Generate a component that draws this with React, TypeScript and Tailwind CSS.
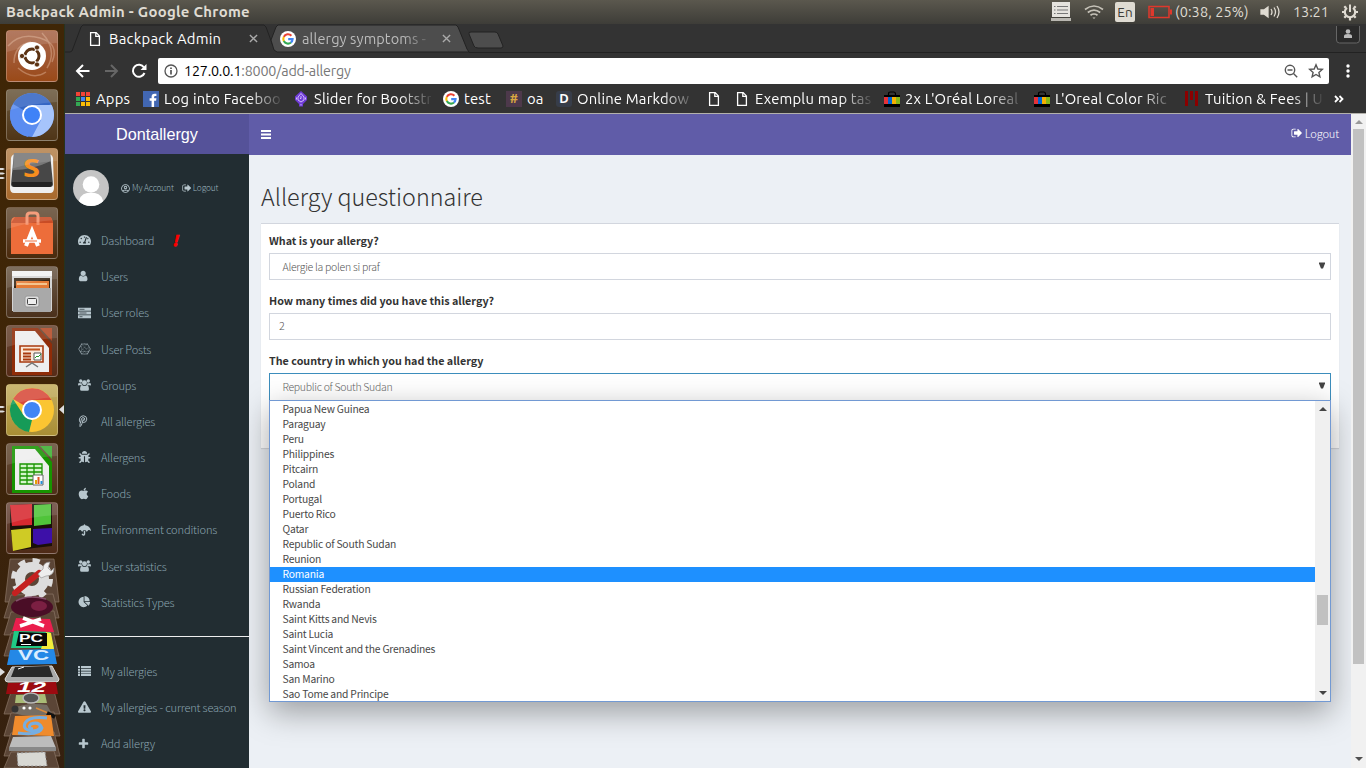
import React from "react";
import {
  FaApple, FaBug, FaUmbrella, FaExclamationTriangle,
  FaTachometerAlt, FaRegUserCircle, FaConnectdevelop,
} from "react-icons/fa";

type IconProps = { className?: string };

const Glyph = ({ d, className }: IconProps & { d: string }) => (
  <svg viewBox="0 0 1792 1792" className={className} fill="currentColor"><path d={d} /></svg>
);
const SignOut = ({ className }: IconProps) => (
  <Glyph className={className} d="M704 1440q0 4 1 20t.5 26.5-3 23.5-10 19.5-20.5 6.5h-320q-119 0-203.5-84.5t-84.5-203.5v-704q0-119 84.5-203.5t203.5-84.5h320q13 0 22.5 9.5t9.5 22.5q0 4 1 20t.5 26.5-3 23.5-10 19.5-20.5 6.5h-320q-66 0-113 47t-47 113v704q0 66 47 113t113 47h312l11.5 1 11.5 3 8 5.5 7 9 2 13.5zm928-544q0 26-19 45l-544 544q-19 19-45 19t-45-19-19-45v-288h-448q-26 0-45-19t-19-45v-384q0-26 19-45t45-19h448v-288q0-26 19-45t45-19 45 19l544 544q19 19 19 45z" />
);
const User = ({ className }: IconProps) => (
  <svg viewBox="200 0 1792 1792" className={className} fill="currentColor"><path d="M1536 1399q0 109-62.5 187t-150.5 78h-854q-88 0-150.5-78t-62.5-187q0-85 8.5-160.5t31.5-152 58.5-131 94-89 134.5-34.5q131 128 313 128t313-128q76 0 134.5 34.5t94 89 58.5 131 31.5 152 8.5 160.5zm-256-887q0 159-112.5 271.5t-271.5 112.5-271.5-112.5-112.5-271.5 112.5-271.5 271.5-112.5 271.5 112.5 112.5 271.5z" /></svg>
);
const Plus = ({ className }: IconProps) => (
  <svg viewBox="150 0 1792 1792" className={className} fill="currentColor"><path d="M1600 736v192q0 40-28 68t-68 28h-416v416q0 40-28 68t-68 28h-192q-40 0-68-28t-28-68v-416h-416q-40 0-68-28t-28-68v-192q0-40 28-68t68-28h416v-416q0-40 28-68t68-28h192q40 0 68 28t28 68v416h416q40 0 68 28t28 68z" /></svg>
);
const Pie = ({ className }: IconProps) => (
  <Glyph className={className} d="M768 890l546 546q-106 108-247.5 168t-298.5 60q-209 0-385.5-103t-279.5-279.5-103-385.5 103-385.5 279.5-279.5 385.5-103v762zm187 6h773q0 157-60 298.5t-168 247.5zm709-128h-768v-768q209 0 385.5 103t279.5 279.5 103 385.5z" />
);
const Group = ({ className }: IconProps) => (
  <svg viewBox="0 0 14 13" className={className} fill="currentColor">
    <circle cx="2.900" cy="2.200" r="1.800" /><circle cx="11.100" cy="2.200" r="1.800" /><circle cx="7" cy="4" r="2.700" />
    <path d="M0 6.600q0-2.400 1-2.400 1.800.7 2.800.2 0 1.700 1 2.500H1.200Q0 7.400 0 6.600zM14 6.600q0-2.400-1-2.400-1.800.7-2.800.2 0 1.700-1 2.500h3.600q1.200.5 1.200-.3zM2.200 11q0-4.200 2.200-4.200Q7 8.600 9.600 6.800q2.200 0 2.200 4.200 0 1.700-1.700 1.700H3.900q-1.700 0-1.700-1.700z" />
  </svg>
);
const Pin = ({ className }: IconProps) => (
  <svg viewBox="0 0 13 13" className={className} fill="none" stroke="currentColor" strokeWidth="1">
    <path d="M2 8.300Q.6 6.500 1 4.300 2 .9 5.200.8q3.700.2 3.800 3.600Q8.700 8.200 5.400 8.200q-1.200 0-1.500-.8" /><path d="m5.300 4-1.600 5.400Q3.200 11.500 1.700 12.600q-.3-1.700.2-3.500L3.200 4.300Q3.700 2.700 5.200 2.700q1.600.2 1.500 1.800-.3 1.800-1.600 1.800" />
  </svg>
);
const ServerStack = ({ className }: IconProps) => (
  <svg viewBox="0 0 13 12" className={className} fill="currentColor">
    <path d="M0 .8h13v3H0zM0 4.500h13v3H0zM0 8.200h13v3H0z" />
    <path d="M1.500 2.300h5M1.500 6h7M1.500 9.700h3" stroke="#222d32" strokeWidth=".7" />
  </svg>
);
const Apple = ({ className }: IconProps) => (
  <span className={className}><FaApple className="h-[13px] w-[11px] -translate-y-px" /></span>
);
const ListIcon = ({ className }: IconProps) => (
  <svg viewBox="0 0 13 11" className={className} fill="currentColor">
    <path d="M0 .5h2v2H0zM0 3.200h2v2H0zM0 5.900h2v2H0zM0 8.600h2v2H0zM3 .5h10v2H3zM3 3.200h10v2H3zM3 5.900h10v2H3zM3 8.600h10v2H3z" />
  </svg>
);

const GoogleG = ({ className }: IconProps) => (
  <svg viewBox="0 0 16 16" className={className} fill="none" strokeWidth="2.100">
    <circle cx="8" cy="8" r="8" fill="#fff" />
    <path d="M11.400 4.700A4.700 4.700 0 0 0 3.800 5.900" stroke="#ea4335" />
    <path d="M3.800 5.900a4.700 4.700 0 0 0 0 4.200" stroke="#fbbc05" />
    <path d="M3.800 10.100a4.700 4.700 0 0 0 7.200 1.400" stroke="#34a853" />
    <path d="M10.900 11.500A4.700 4.700 0 0 0 12.600 8.100H8.200" stroke="#4285f4" />
  </svg>
);
const Doc = () => (
  <svg viewBox="0 0 16 16" className="h-4 w-4" fill="none" stroke="#fff" strokeWidth="1.300">
    <path d="M3.600 1.600h5.600l3.200 3.300v9.500H3.600zM8.800 1.800v3.500h3.500" />
  </svg>
);
const Bag = () => (
  <svg viewBox="0 0 16 16" className="h-4 w-4">
    <path d="M4.500 5V3q0-2 2-2h3q2 0 2 2v2" fill="none" stroke="#000" strokeWidth="1.200" />
    <path fill="#000" d="M0 4h16v12H0z" />
    <path fill="#e53238" d="M0 6h4.200v7H0z" /><path fill="#0064d2" d="M4 6h4v7H4z" />
    <path fill="#f5af02" d="M8 6h4v7H8z" /><path fill="#86b817" d="M12 6h4v7h-4z" />
  </svg>
);
const Apps = () => (
  <svg viewBox="0 0 16 16" className="h-4 w-4">
    {["#f44336", "#f44336", "#f44336", "#34a853", "#4285f4", "#fbbc05", "#34a853", "#fbbc05", "#fbbc05"].map((c, i) => (
      <rect key={i} x={1 + (i % 3) * 5} y={1 + Math.floor(i / 3) * 5} width="4" height="4" fill={c} />
    ))}
  </svg>
);

const bookmarks: { icon: React.ReactNode; text: string; w: string; fade?: boolean }[] = [
  { icon: <Apps />, text: "Apps", w: "w-[68px]" },
  { icon: <svg viewBox="0 0 16 16" className="h-4 w-4"><path fill="#4267b2" d="M0 0h16v16H0z" /><path fill="#fff" d="M8.600 16V9.800H6.600V7.300h2V5.600q0-2.900 2.900-2.900h1.900V5h-1.200q-1.100 0-1.100 1.100v1.200h2.300l-.3 2.500h-2V16z" /></svg>, text: "Log into Faceboo", w: "w-[150px]", fade: true },
  { icon: <svg viewBox="0 0 16 16" className="h-4 w-4"><path d="M8 0 14 5.500V9l-4 4v2.500H6V13L2 9V5.500z" fill="#6f3bd8" /><path d="M8 2.500 5 6v3l3 2 3-2V6zM3.500 6.500v2M12.500 6.500v2M8 5v2.500H7M8 13v1.500" stroke="#dcc8ff" fill="none" strokeWidth=".9" /></svg>, text: "Slider for Bootstr", w: "w-[150px]", fade: true },
  { icon: <GoogleG className="h-4 w-4" />, text: "test", w: "w-[63px]" },
  { icon: <span className="flex h-4 w-4 items-center justify-center bg-[#4d394b] text-[12px] font-bold text-[#d9a741]">#</span>, text: "oa", w: "w-[50px]" },
  { icon: <span className="flex h-4 w-4 items-center justify-center rounded-[3px] bg-[#373d49] text-[13px] font-bold text-white">D</span>, text: "Online Markdow", w: "w-[150px]", fade: true },
  { icon: <Doc />, text: "", w: "w-[28px]" },
  { icon: <Doc />, text: "Exemplu map tas", w: "w-[150px]", fade: true },
  { icon: <Bag />, text: "2x L'Oréal Loreal", w: "w-[150px]", fade: true },
  { icon: <Bag />, text: "L'Oreal Color Ric", w: "w-[150px]", fade: true },
  { icon: <svg viewBox="0 0 16 16" className="h-4 w-4"><path fill="#8b0000" d="M1 0h3v15H1zM6 0h3v9H6zM11 0h3v15h-3z" /></svg>, text: "Tuition & Fees | U", w: "w-[150px]", fade: true },
];

const Tile = ({ bg, children }: { bg: string; children: React.ReactNode }) => (
  <div className={`h-[52px] w-[52px] shrink-0 overflow-hidden rounded-[4px] border border-white/25 ${bg}`}>
    <svg viewBox="0 0 52 52" className="-ml-px -mt-px h-[52px] w-[52px]">
      {children}
      <path d="M1 1h50v12Q26 14 1 22z" fill="#fff" opacity=".12" />
    </svg>
  </div>
);

const Launcher = () => (
  <aside className="relative flex w-[65px] shrink-0 flex-col gap-[7px] border-r border-[#26331f] bg-linear-to-b from-[#3f2606] via-[#3f2508] to-[#35200f] pl-1.5 pt-1.5">
    <Tile bg="bg-linear-to-b from-[#a8674a] to-[#9a4a18]">
      <g fill="none" stroke="#dcae91" strokeWidth="1.500" opacity=".5">
        <path d="M2 16Q14 2 34 8t12 24" /><path d="M8 33Q8 15 25 12" /><path d="M12 38q15 13 28 4" /><path d="M36 3Q52 20 41 38" />
      </g>
      <circle cx="26" cy="26" r="14" fill="#fff" />
      <circle cx="26" cy="26" r="7" fill="none" stroke="#5b3213" strokeWidth="3" />
      <path d="M26 26 14 26M26 26l6-10M26 26l6 10" stroke="#fff" strokeWidth="1.300" />
      <circle cx="26" cy="26" r="5" fill="#fff" />
      <g fill="#5b3213" stroke="#fff" strokeWidth=".8"><circle cx="16" cy="26" r="2.600" /><circle cx="31" cy="17.500" r="2.600" /><circle cx="31" cy="34.500" r="2.600" /></g>
    </Tile>
    <Tile bg="bg-linear-to-b from-[#6b5a40] to-[#4f3517]">
      <circle cx="26" cy="26" r="22" fill="#5b8def" />
      <path d="M26 26 7 15A22 22 0 0 1 45 15z" fill="#3566c4" /><path d="M26 16h19.600A22 22 0 0 1 26 48l9-17z" fill="#a6c4fb" />
      <path d="M6.500 16 17 32l9 3-4 13A22 22 0 0 1 6.500 16z" fill="#5b8cf0" />
      <circle cx="26" cy="26" r="10" fill="#fff" /><circle cx="26" cy="26" r="8" fill="#3e82f7" />
    </Tile>
    <Tile bg="bg-linear-to-b from-[#b58450] to-[#a8692c]">
      <path d="M5 10q1-4 5-4h32q4 0 5 4l1 30q0 5-4 5H8q-4 0-4-5z" fill="#eee" />
      <path d="M8 5h36l3 31q0 3-3 3H8q-3 0-3-3z" fill="#474747" /><path d="M6 34h40v2q0 3-3 3H9q-3 0-3-3z" fill="#222" /><path d="M8 5h36l1 8Q26 22 7 22z" fill="#777" />
      <text x="17" y="29" fontFamily="Open Sans, sans-serif" fontWeight="bold" fontSize="25" fill="#f78e1e" textLength="17" lengthAdjust="spacingAndGlyphs">S</text>
    </Tile>
    <Tile bg="bg-linear-to-b from-[#675039] to-[#4a2a0c]">
      <path d="M5 16q0-6 4-6h34q3 0 4 6v31H5z" fill="#ed6d3a" /><path d="M5 16h42l-2-6H9z" fill="#c94c25" />
      <path d="M21 18V9q0-3 3-3h5q3 0 3 3v9" fill="none" stroke="#f4906a" strokeWidth="3" />
      <path d="m20 39 6-15 6 15" fill="none" stroke="#fff" strokeWidth="4" /><path d="M17 34h18" stroke="#fff" strokeWidth="3.500" /><path d="M19 34h12" stroke="#ed6d3a" strokeWidth="1.200" />
    </Tile>
    <Tile bg="bg-linear-to-b from-[#6d5b49] to-[#4a301b]">
      <path d="M6 5h40v40H6z" fill="#d4d4d4" /><path d="M6 5h40v5H6z" fill="#f2f2f2" /><path d="M8 12h36v12H8z" fill="#332414" />
      <path d="M10 15h33v8H10z" fill="#e47b36" /><path d="M11 18h30" stroke="#f9dcae" strokeWidth="1.500" />
      <path d="M7 22h38v24H7z" fill="#a9a9a9" /><rect x="19" y="30" width="14" height="11" rx="2" fill="#dedede" stroke="#999" /><rect x="21.500" y="32.500" width="9" height="6" rx="1" fill="#eee" stroke="#444" />
    </Tile>
    <Tile bg="bg-linear-to-b from-[#684733] to-[#562b17]">
      <path d="M6 3h26l14 16v31H6z" fill="#8f2c08" /><path d="M34 3h12v13z" fill="#b34824" /><path d="M9 6h20l14 17v24H9z" fill="#eee" />
      <path d="M14 21h23v16H14z" fill="#fbe8d9" stroke="#a8390e" strokeWidth="1.600" /><path d="M17 24.500h17" stroke="#c0541f" strokeWidth="2" />
      <path d="M17 28.500h8M17 31.500h8M17 34.500h8" stroke="#a8390e" strokeWidth="1.800" /><path d="M28 28h7v7h-7z" fill="#fff" stroke="#555" /><path d="m29 33 2-2 1 1 3-3" stroke="#289a28" fill="none" />
      <path d="m20 42 6-4 6 4" stroke="#777" strokeWidth="1.500" fill="none" />
    </Tile>
    <Tile bg="bg-linear-to-b from-[#c4ae5f] to-[#a98e35]">
      <circle cx="26" cy="26" r="22" fill="#fbc532" />
      <path d="M26 26 7 15A22 22 0 0 1 45.500 16H26z" fill="#d84a3b" /><path d="M7 15 17.500 31 26 36l-3 12A22 22 0 0 1 7 15z" fill="#169b58" />
      <circle cx="26" cy="26" r="10" fill="#fff" /><circle cx="26" cy="26" r="8" fill="#4285f4" />
    </Tile>
    <Tile bg="bg-linear-to-b from-[#675039] to-[#4f2f19]">
      <path d="M6 3h26l14 16v31H6z" fill="#179400" /><path d="M34 3h12v13z" fill="#3cb030" /><path d="M9 6h20l14 17v24H9z" fill="#eee" />
      <path d="M14 21h22v20H14z" fill="#d4f5cb" /><path d="M14 21h22v20H14zM14 25h22M14 29h22M14 33h22M14 37h22M21 21v20M28 21v20" stroke="#189400" fill="none" strokeWidth="1.300" />
      <path d="M27 32h10v10H27z" fill="#fff" stroke="#666" /><path d="M29 37h2v4h-2z" fill="#e4a200" /><path d="M31.500 34h2v7h-2z" fill="#dd5722" /><path d="M34.500 38h2v3h-2z" fill="#258fd8" />
    </Tile>
    <Tile bg="bg-linear-to-b from-[#6d4c40] to-[#4e2a16]">
      <path d="m4 3 24-1 18 0v42l-18 2-20 3-4-23z" fill="#1a1008" />
      <path d="m4 3 22-1v21L6 24z" fill="#d82a30" /><path d="m28 3 17-1v20l-17 2z" fill="#50c43a" /><path d="m5 28 20-2v19L7 49z" fill="#cfcb25" /><path d="m27 27 19-1v15l-14 2-5-2z" fill="#3d10a8" />
    </Tile>
    <svg viewBox="0 0 65 211" className="absolute left-0 top-[533px] h-[211px] w-[65px]">
      <g fill="#5b4536" stroke="#8b7565" strokeWidth=".7">
        <path d="M10 2h44l5 43H5z" /><path d="m11 38 42-1 6 24H4z" /><path d="m11 55 43-1 5 24H4z" /><path d="m11 76 42-1 6 24H4z" />
        <path d="m11 135 43-1 6 23H4z" /><path d="m11 156 43-1 6 24H4z" /><path d="m11 176 43-1 6 24H4z" /><path d="m11 195 43-1 5 17H4z" />
      </g>
      <circle cx="32" cy="22" r="12" fill="none" stroke="#ddd" strokeWidth="10" /><circle cx="32" cy="22" r="18" fill="none" stroke="#ddd" strokeWidth="6" strokeDasharray="7 7.137" />
      <path d="m15 36 24-20" stroke="#c52020" strokeWidth="6" strokeLinecap="round" /><path d="m38 17 5-5q0-7 7-7l-2 6 3 3 3-3q0 8-8 8l-5 2z" fill="#eee" stroke="#999" strokeWidth=".7" />
      <ellipse cx="32" cy="50" rx="21" ry="10" fill="#4a0d26" /><ellipse cx="39" cy="49" rx="8" ry="5" fill="#7b1f42" /><path d="M16 44q12-7 30-2" fill="none" stroke="#84506a" strokeWidth="1.500" />
      <path d="m16 61 34 1 4 13-42-1z" fill="#ea1e4d" /><path d="m20 69 21-7M23 61l21 8" stroke="#fff" strokeWidth="3.500" />
      <path d="m14 74 36 1 4 16H11z" fill="#20ca86" /><path d="m46 75 5 1 3 16H41z" fill="#f4ec3a" /><path d="m19 75 28 1v13H16z" fill="#080808" />
      <text x="19" y="84.500" fill="#fff" fontFamily="Liberation Sans" fontWeight="bold" fontSize="11" textLength="24" lengthAdjust="spacingAndGlyphs">PC</text><path d="M21 87.500h10" stroke="#fff" />
      <path d="m10 93 44-1 3 15-50 1z" fill="#2488e6" /><text x="18" y="102.500" fill="#d9edff" fontFamily="Liberation Sans" fontWeight="bold" fontSize="14" textLength="31" lengthAdjust="spacingAndGlyphs">VC</text>
      <path d="m12 110 40-1 7 13q0 3-3 3H8q-3 0-3-3z" fill="#aaa" stroke="#ddd" /><path d="m15 110 34-1 4 11H11z" fill="#292929" /><path d="m18 112 6-2" stroke="#fff" />
      <path d="m8 126 48-1 2 12H6z" fill="#9c0a10" /><text x="17" y="135" fill="#fff" fontFamily="Liberation Sans" fontWeight="bold" fontStyle="italic" fontSize="14" textLength="29" lengthAdjust="spacingAndGlyphs">12</text>
      <path d="m16 138 29-1 2 9H15z" fill="#a9bb76" /><ellipse cx="31" cy="141" rx="8" ry="5" fill="#555" stroke="#bbb" strokeWidth="1.500" /><path d="M12 152q14-7 35-4l5 9q-20 5-39-1z" fill="#766e64" /><circle cx="24" cy="151" r="1.600" fill="#fff" /><circle cx="30" cy="151" r="1.600" fill="#fff" /><circle cx="15" cy="152" r="3.500" fill="#333" /><path d="m36 151 12 5" stroke="#d98a3c" strokeWidth="1.500" /><path d="m47 156 8 4" stroke="#111" strokeWidth="4" />
      <path d="m15 159 36-1 3 21-42-1z" fill="#ef8b2d" /><path d="M18 176q22 3 24-5-3-7-11-4-4 4 2 5M47 161q-18-2-22 5-3 7 8 8 8-1 7-5" fill="none" stroke="#76aee2" strokeWidth="3" />
      <path d="m13 180 38-1 5 12H9z" fill="#bcbcbc" /><path d="M9 190h47v4H9z" fill="#888" /><path d="m17 196 28-1 2 14H18z" fill="#d8d8d3" strokeDasharray="2" stroke="#999" />
    </svg>
    <svg viewBox="0 0 65 744" className="pointer-events-none absolute left-0 top-0 h-[744px] w-[65px]" fill="#ddd">
      <path d="M0 144h3l2 1-2 1H0zM0 148.500h3l2 1-2 1H0zM0 153h3l2 1-2 1H0zM0 382h3l2 1-2 1H0zM0 386.500h3l2 1-2 1H0zM0 644l5 4-5 4zM64 381v9l-5-4.500z" />
    </svg>
  </aside>
);

const Indicators = () => (
  <div className="flex items-center pr-[7px] text-[14.500px] text-[#dfdbd2]">
    <svg viewBox="0 0 20 20" className="mr-[13px] h-5 w-5"><path fill="#e5e3de" d="M1 0h18v15H1z" /><path d="M0 16h20v3H0z" fill="#b9b7b1" /><path d="M3 4.500h1.500M6 4.500h11M3 8h1.500M6 8h11M3 11.500h1.500M6 11.500h11" stroke="#777" strokeWidth="1.200" /></svg>
    <svg viewBox="0 0 20 16" className="mr-[11px] h-4 w-5" fill="none" stroke="#c6c2b8" strokeWidth="1.700"><path d="M1 5.500q9-7 18 0M3.800 8.500q6.200-4.800 12.400 0M6.500 11.300q3.500-2.600 7 0" /><path d="M8.500 13.500h3L10 15z" fill="#c6c2b8" stroke="none" /></svg>
    <span className="mr-[13px] flex h-5 w-5 items-center justify-center rounded-[2px] bg-[#dfdbd2] text-[13.500px] text-[#3c3b37]">En</span>
    <svg viewBox="0 0 24 14" className="mr-[3px] h-[14px] w-6"><path d="M1 1.500h20v11H1z" fill="none" stroke="#df382c" strokeWidth="1.500" /><path d="M2.500 3h3.500v8H2.500zM22 4.500h2v5h-2z" fill="#df382c" /></svg>
    <span className="w-[75px] whitespace-nowrap tracking-[0.1px]">(0:38, 25%)</span>
    <svg viewBox="0 0 20 16" className="ml-[10px] h-4 w-5" fill="none" stroke="#dfdbd2" strokeWidth="1.300"><path d="M1 6h3l4-3v10l-4-3H1z" fill="#dfdbd2" /><path d="M11 5q2 3 0 6M14 3.500q3 4.500 0 9M17 2q4 6 0 12" /></svg>
    <span className="ml-[13px] w-[38px] whitespace-nowrap tracking-[-0.1px]">13:21</span>
    <svg viewBox="0 0 18 18" className="ml-[10px] h-[18px] w-[18px]" fill="none" stroke="#dfdbd2"><path d="M6 4.800a5.200 5.200 0 1 0 6 0" strokeWidth="2.200" /><path d="M9 1.500V9" strokeWidth="2" /><path d="M9 15v2.500M1 9h2M15 9h2M3.300 3.300l1.600 1.600M14.700 3.300l-1.600 1.600M3.300 14.700l1.600-1.600M14.700 14.700l-1.600-1.600" strokeWidth="2.200" /></svg>
  </div>
);

const Chrome = () => (
  <header className="shrink-0 border-b border-[#b3b1ab] bg-[#333333] text-white">
    <div className="relative flex h-[29px] items-center">
      <svg viewBox="0 0 1301 29" className="absolute left-0 top-0 h-[29px] w-[1301px]">
        <path d="M0 28h5l2-1L16 3l2-2h181l2 2 7 19" fill="none" stroke="#222" />
        <path d="m206 16 5-13 2-2h178l2 2 9 22 2 3H212l-3-2z" fill="#4d4d4d" stroke="#222" />
        <path d="m404 28.500 897 0" stroke="#222" /><path d="M404 10q-1-2 2-2h24q2 0 3 2l5 12q0 2-2 2h-23q-3 0-4-2z" fill="#4d4d4d" stroke="#222" />
      </svg>
      <div className="relative flex w-[215px] items-center pl-[22px]">
        <Doc /><span className="ml-[6px] w-[140px] whitespace-nowrap pt-px text-[14.800px] tracking-[0.28px]">Backpack Admin</span>
        <svg viewBox="0 0 10 10" className="h-[9px] w-[9px]" stroke="#aaa" strokeWidth="1.500"><path d="m1 1 8 8M9 1 1 9" /></svg>
      </div>
      <div className="relative flex items-center text-[#bcbcbc]">
        <GoogleG className="h-4 w-4" />
        <span className="ml-[6px] w-[127px] whitespace-nowrap text-[14.500px] tracking-[0.12px] [mask-image:linear-gradient(to_right,#000_100px,transparent_132px)]">allergy symptoms -</span>
        <svg viewBox="0 0 10 10" className="ml-[13px] h-[9px] w-[9px]" stroke="#aaa" strokeWidth="1.500"><path d="m1 1 8 8M9 1 1 9" /></svg>
      </div>
      <svg viewBox="0 0 24 18" className="relative ml-auto mr-[6px] mt-[-8px] h-[18px] w-6"><path d="M.5 0v14q0 3 3 3h17q3 0 3-3V0" fill="#2a2a2a" stroke="#666" /><path d="M8 12v-2q0-2 4-2t4 2v2z" fill="#bbb" /><circle cx="12" cy="5.500" r="2.300" fill="#bbb" /></svg>
    </div>
    <div className="flex h-[32px] items-center pt-1">
      <svg viewBox="0 0 80 18" className="ml-[9px] h-[18px] w-20" fill="none" strokeWidth="2"><path d="M15.500 9H3M9 3 3 9l6 6" stroke="#fff" /><path d="M31 9h12.500M37 3l6 6-6 6" stroke="#666" /><path d="M70 5.500A6 6 0 1 0 70.500 11" stroke="#fff" /><path d="M72.500 2v6h-6z" fill="#fff" /></svg>
      <div className="ml-[4px] flex h-[26px] w-[1171px] items-center rounded-[2px] bg-white pl-[6px] pr-[5px]">
        <svg viewBox="0 0 14 14" className="h-[14px] w-[14px]" fill="none" stroke="#555" strokeWidth="1.300"><circle cx="7" cy="7" r="6" /><path d="M7 6v4.500M7 3.500V5" strokeWidth="1.700" /></svg>
        <span className="ml-[6px] pt-px text-[14.300px] tracking-[-0.18px] text-[#777]"><span className="text-black">127.0.0.1</span>:8000/add-allergy</span>
        <svg viewBox="0 0 42 16" className="ml-auto h-4 w-[42px]" fill="none" stroke="#555" strokeWidth="1.400"><circle cx="8" cy="7" r="4.700" /><path d="m11.500 10.500 3.700 3.700M5.500 7h5" /><path d="m34 1.800 1.800 4.200 4.500.4-3.400 3 1 4.500-3.900-2.400-3.900 2.400 1-4.500-3.400-3 4.500-.4z" /></svg>
      </div>
      <svg viewBox="0 0 4 14" className="ml-[17px] h-[14px] w-1" fill="#fff"><circle cx="2" cy="2" r="1.700" /><circle cx="2" cy="7" r="1.700" /><circle cx="2" cy="12" r="1.700" /></svg>
    </div>
    <div className="flex h-[28px] items-center pl-[10px] text-[14.800px]">
      {bookmarks.map((b, i) => (
        <div key={i} className={`flex shrink-0 items-center ${b.w}`}>
          {b.icon}
          <span className={`ml-[5px] whitespace-nowrap tracking-[0.2px] ${b.fade ? "w-[117px] [mask-image:linear-gradient(to_right,#000_85px,transparent_120px)]" : ""}`}>{b.text}</span>
        </div>
      ))}
      <svg viewBox="0 0 10 8" className="h-2 w-[10px] shrink-0" fill="none" stroke="#fff" strokeWidth="1.800"><path d="m1 1 3 3-3 3M5.500 1l3 3-3 3" /></svg>
    </div>
  </header>
);

const menu: [React.ComponentType<IconProps>, string][] = [
  [FaTachometerAlt, "Dashboard"], [User, "Users"], [ServerStack, "User roles"], [FaConnectdevelop, "User Posts"],
  [Group, "Groups"], [Pin, "All allergies"], [FaBug, "Allergens"], [Apple, "Foods"],
  [FaUmbrella, "Environment conditions"], [Group, "User statistics"], [Pie, "Statistics Types"],
];
const personal: [React.ComponentType<IconProps>, string][] = [
  [ListIcon, "My allergies"], [FaExclamationTriangle, "My allergies - current season"], [Plus, "Add allergy"],
];
const MenuRow = ({ icon: Icon, text }: { icon: React.ComponentType<IconProps>; text: string }) => (
  <li className="flex h-[36.200px] items-center pl-[13px] text-[11.100px] font-light tracking-[-0.18px]">
    <Icon className="h-3 w-[13px] text-[#b8c7ce]" />
    <span className="ml-[10px] whitespace-nowrap">{text}</span>
    {text === "Dashboard" && <span className="ml-[18px] text-[14px] font-black italic text-[#ff0000] [-webkit-text-stroke:0.8px_#ff0000]">!</span>}
  </li>
);

const Sidebar = () => (
  <nav className="flex w-[184px] shrink-0 flex-col bg-[#222d32] text-[#8aa4af]">
    <div className="flex h-10 shrink-0 items-center justify-center bg-[#555299] font-['Liberation_Sans',sans-serif] text-[16.200px] text-white">Dontallergy</div>
    <div className="mt-4 flex h-9 items-center pl-2 text-[8.400px] font-light tracking-[-0.16px] text-[#9bb3bd]">
      <svg viewBox="0 0 36 36" className="h-9 w-9 rounded-full bg-[#c5c5c5]" fill="#fff"><circle cx="18" cy="14.500" r="8.300" /><path d="M5 36q1-12 9-13h8q8 1 9 13z" /></svg>
      <FaRegUserCircle className="ml-3 h-[9px] w-[9px] text-[#b8c7ce]" /><span className="mb-[2px] ml-[2px] whitespace-nowrap">My Account</span>
      <SignOut className="ml-2 h-[10px] w-[10px] text-[#b8c7ce]" /><span className="mb-[2px] ml-px">Logout</span>
    </div>
    <ul className="mt-[16.200px]">{menu.map(([i, t]) => <MenuRow key={t} icon={i} text={t} />)}</ul>
    <hr className="mt-[15.800px] border-[#eeeeee]" />
    <ul className="mt-[16.100px]">{personal.map(([i, t]) => <MenuRow key={t} icon={i} text={t} />)}</ul>
  </nav>
);

const countries = [
  "Papua New Guinea", "Paraguay", "Peru", "Philippines", "Pitcairn", "Poland", "Portugal", "Puerto Rico", "Qatar",
  "Republic of South Sudan", "Reunion", "Romania", "Russian Federation", "Rwanda", "Saint Kitts and Nevis",
  "Saint Lucia", "Saint Vincent and the Grenadines", "Samoa", "San Marino", "Sao Tome and Principe",
];
const Arrow = ({ className, up }: IconProps & { up?: boolean }) => (
  <svg viewBox="0 0 8 4" className={className} fill="currentColor"><path d={up ? "M0 4 4 0l4 4z" : "M0 0h8L4 4z"} /></svg>
);
const Caret = () => <svg viewBox="0 0 6 7" className="mb-0.5 h-[7px] w-1.5" fill="#444"><path d="M0 .500h6v1L4 6.500H2L0 1.500z" /></svg>;

const Form = () => (
  <section className="flex h-[225px] flex-col border-t border-[#d2d6de] bg-white px-2 text-[10.750px] shadow-[0_1px_1px_rgba(0,0,0,0.1)]">
    <label className="mt-[9px] h-5 font-bold leading-[16px] text-[#333]">What is your allergy?</label>
    <div className="flex h-[27px] items-center justify-between border border-[#d2d6de] pl-[12.500px] pr-[5px] text-[10.500px] font-light tracking-[-0.27px] text-[#555]">Alergie la polen si praf<Caret /></div>
    <label className="mt-[13px] h-5 font-bold leading-[16px] text-[#333]">How many times did you have this allergy?</label>
    <div className="flex h-[27px] items-center border border-[#d2d6de] pl-[9px] font-light text-[#555]">2</div>
    <label className="mt-[13px] h-5 font-bold leading-[16px] text-[#333]">The country in which you had the allergy</label>
    <div className="relative h-[28px]">
      <div className="flex h-[28px] items-center justify-between border border-[#3c8dbc] pb-px pl-[12.500px] pr-[5px] text-[10.500px] font-light tracking-[-0.3px] text-[#666]">Republic of South Sudan<Caret /></div>
      <div className="absolute left-0 right-0 top-[27px] z-10 flex h-[302px] border border-[#7299d3] bg-white text-[10.300px] tracking-[-0.2px] text-[#484848] shadow-[0_10px_30px_rgba(0,0,0,0.35)]">
        <ul className="flex-1 pt-px">
          {countries.map((c) => <li key={c} className={`h-[15px] pl-[12.500px] leading-[13px] ${c === "Romania" ? "bg-[#1e90ff] text-white" : ""}`}>{c}</li>)}
        </ul>
        <div className="flex w-[15px] flex-col items-center bg-[#f0f0f0] text-[#444]">
          <Arrow up className="mt-[6px] h-1 w-2" />
          <div className="mt-[184px] h-[30px] w-[11px] bg-[#c1c1c1]" />
          <Arrow className="mb-[6px] mt-auto h-1 w-2" />
        </div>
      </div>
    </div>
  </section>
);

export default function App() {
  return (
    <div className="flex h-[768px] w-[1366px] flex-col overflow-hidden font-['Ubuntu','Noto_Sans',sans-serif]">
      <div className="flex h-6 shrink-0 items-center justify-between bg-linear-to-b from-[#5b584e] to-[#3e3d38] pl-1.5">
        <h1 className="text-[14.900px] font-bold tracking-[0.3px] text-[#dfdbd2]">Backpack Admin - Google Chrome</h1>
        <Indicators />
      </div>
      <div className="flex min-h-0 flex-1">
        <Launcher />
        <div className="flex min-w-0 flex-1 flex-col">
          <Chrome />
          <div className="flex min-h-0 flex-1 font-['Source_Sans_Pro','Noto_Sans_CJK_SC',sans-serif]">
            <Sidebar />
            <main className="flex min-w-0 flex-1 flex-col overflow-hidden bg-[#ecf0f5]">
              <div className="flex h-[41px] shrink-0 items-center justify-between bg-[#605ca8] px-3 text-white">
                <svg viewBox="0 0 10 9" className="h-[9px] w-[10px]" stroke="#fff" strokeWidth="1.800"><path d="M0 1h10M0 4.500h10M0 8h10" /></svg>
                <span className="flex items-center gap-[2px] pb-[2px] text-[11.100px] font-light tracking-[-0.15px]"><SignOut className="h-3 w-3" />Logout</span>
              </div>
              <div className="px-3 pt-[22px]">
                <h2 className="h-[46px] text-[23.300px] font-light leading-[38px] text-[#333]">Allergy questionnaire</h2>
                <Form />
              </div>
            </main>
            <div className="flex w-[15px] shrink-0 flex-col items-center bg-[#f1f1f1] text-[#505050]">
              <Arrow up className="mt-[6px] h-1 w-2 text-[#999]" />
              <div className="mt-[5px] h-[535px] w-[11px] bg-[#c1c1c1]" />
              <Arrow className="mb-[7px] mt-auto h-1 w-2" />
            </div>
          </div>
        </div>
      </div>
    </div>
  );
}
